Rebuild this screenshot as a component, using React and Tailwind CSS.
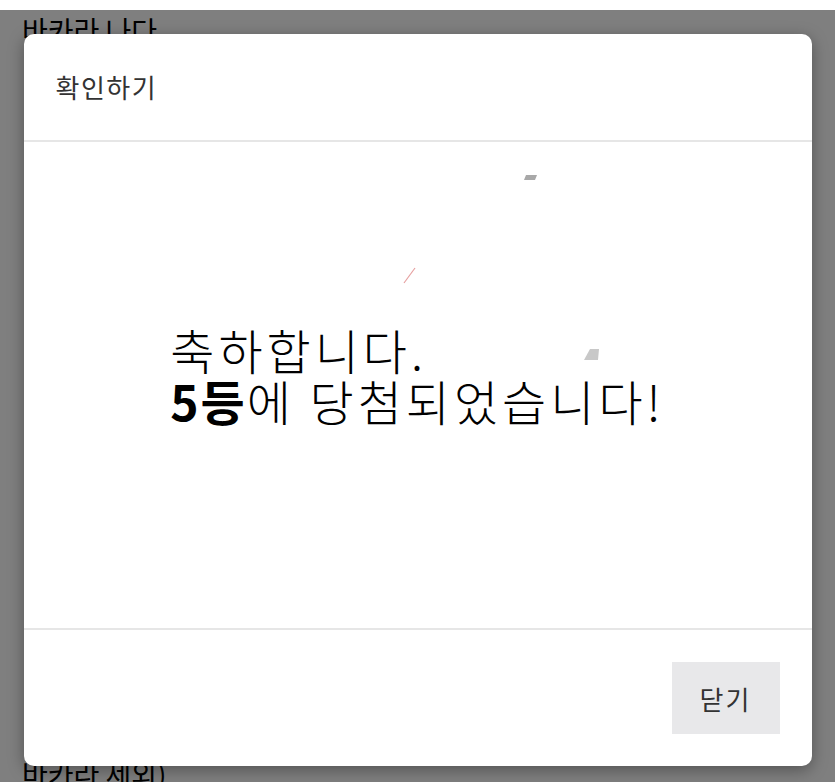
export default function App() {
  return (
    <div
      className="relative h-[782px] w-[835px] overflow-hidden bg-white text-black"
      style={{ fontFamily: '"Noto Sans CJK KR", "Noto Sans", sans-serif' }}
    >
      {/* page behind the dialog */}
      <div className="flex h-full flex-col justify-between pl-[22px] pt-[13px] text-[28px] leading-[34px]">
        <p>바카라 나다</p>
        <p className="translate-y-[8px]">바카라 제외)</p>
      </div>

      {/* overlay */}
      <div className="absolute inset-x-0 top-[10px] bottom-0 flex items-start justify-center bg-black/50 pt-[24px]">
        <div className="flex h-[732px] w-[788px] flex-col overflow-hidden rounded-[10px] bg-white shadow-[0_4px_16px_rgba(0,0,0,0.35)]">
          <div className="flex h-[108px] shrink-0 items-center border-b-2 border-[#e6e6e6] px-8">
            <h2 className="text-[26px] leading-none tracking-[1.5px] text-[#333]">확인하기</h2>
          </div>

          <div className="relative flex flex-1 items-center justify-center pb-[20px]">
            <svg className="absolute left-0 top-0" width="788" height="485" viewBox="0 0 788 485">
              <polygon points="502,33 513,33 511,38 500,38" fill="#a8a8a8" />
              <line x1="380" y1="141" x2="391" y2="126" stroke="#e6a0a0" strokeWidth="1.2" />
              <polygon points="566,207 575,207 574,218 560,218" fill="#c8c8c8" />
            </svg>
            <div className="text-left text-[48px] font-light leading-[51px] tracking-[4px]">
              <p>축하합니다.</p>
              <p>
                <b className="font-bold tracking-[2px]">5등</b>에 당첨되었습니다!
              </p>
            </div>
          </div>

          <div className="flex h-[138px] shrink-0 items-center justify-end border-t-2 border-[#e6e6e6] px-8">
            <button className="flex h-[72px] w-[108px] items-center justify-center bg-[#e8e8ea] text-[26px] tracking-[2px] text-[#333]">
              닫기
            </button>
          </div>
        </div>
      </div>
    </div>
  );
}
